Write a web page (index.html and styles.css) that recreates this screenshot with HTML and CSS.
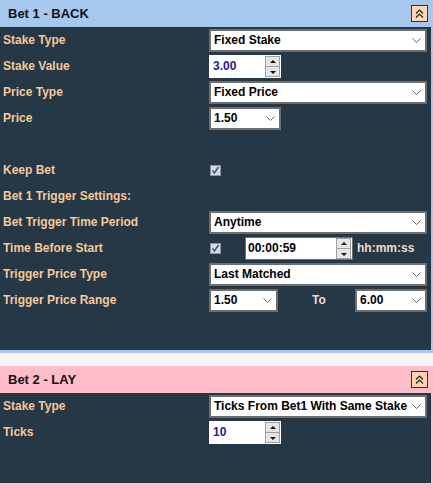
FILE: index.html
```html
<!DOCTYPE html>
<html>
<head>
    <meta charset="utf-8">
    <link rel="stylesheet" href="styles.css">
</head>
<body>
    <div class="panel panel-back">
        <div class="panel-head">
            <span>Bet 1 - BACK</span>
            <button class="collapse-btn"><svg width="11" height="11" viewBox="0 0 11 11"><path d="M2 5.5 L5.5 2 L9 5.5 M2 9.5 L5.5 6 L9 9.5" fill="none" stroke="#222" stroke-width="1.2"/></svg></button>
        </div>
        <div class="panel-body body-back">
            <div class="row">
                <label>Stake Type</label>
                <div class="select full"><span>Fixed Stake</span><svg class="chev" width="9" height="5" viewBox="0 0 9 5"><path d="M0.5 0.5 L4.5 4.5 L8.5 0.5" fill="none" stroke="#666" stroke-width="1"/></svg></div>
            </div>
            <div class="row">
                <label>Stake Value</label>
                <div class="spin-input"><span>3.00</span><div class="spinner"><div class="spin-up"></div><div class="spin-down"></div></div></div>
            </div>
            <div class="row">
                <label>Price Type</label>
                <div class="select full"><span>Fixed Price</span><svg class="chev" width="9" height="5" viewBox="0 0 9 5"><path d="M0.5 0.5 L4.5 4.5 L8.5 0.5" fill="none" stroke="#666" stroke-width="1"/></svg></div>
            </div>
            <div class="row">
                <label>Price</label>
                <div class="select small"><span>1.50</span><svg class="chev" width="9" height="5" viewBox="0 0 9 5"><path d="M0.5 0.5 L4.5 4.5 L8.5 0.5" fill="none" stroke="#666" stroke-width="1"/></svg></div>
            </div>
            <div class="row"></div>
            <div class="row">
                <label>Keep Bet</label>
                <div class="check"><svg width="11" height="11" viewBox="0 0 11 11"><rect x="0.5" y="0.5" width="10" height="10" fill="#d5dbe4" stroke="#8a94a6"/><path d="M2.5 5.5 L4.5 8 L8.5 2" fill="none" stroke="#3b55a6" stroke-width="1.6"/></svg></div>
            </div>
            <div class="row">
                <label>Bet 1 Trigger Settings:</label>
            </div>
            <div class="row">
                <label>Bet Trigger Time Period</label>
                <div class="select full"><span>Anytime</span><svg class="chev" width="9" height="5" viewBox="0 0 9 5"><path d="M0.5 0.5 L4.5 4.5 L8.5 0.5" fill="none" stroke="#666" stroke-width="1"/></svg></div>
            </div>
            <div class="row">
                <label>Time Before Start</label>
                <div class="time-group">
                    <div class="check"><svg width="11" height="11" viewBox="0 0 11 11"><rect x="0.5" y="0.5" width="10" height="10" fill="#d5dbe4" stroke="#8a94a6"/><path d="M2.5 5.5 L4.5 8 L8.5 2" fill="none" stroke="#3b55a6" stroke-width="1.6"/></svg></div>
                    <div class="spin-input time-input"><span>00:00:59</span><div class="spinner"><div class="spin-up"></div><div class="spin-down"></div></div></div>
                    <span class="unit">hh:mm:ss</span>
                </div>
            </div>
            <div class="row">
                <label>Trigger Price Type</label>
                <div class="select full"><span>Last Matched</span><svg class="chev" width="9" height="5" viewBox="0 0 9 5"><path d="M0.5 0.5 L4.5 4.5 L8.5 0.5" fill="none" stroke="#666" stroke-width="1"/></svg></div>
            </div>
            <div class="row">
                <label>Trigger Price Range</label>
                <div class="range-group">
                    <div class="select range"><span>1.50</span><svg class="chev" width="9" height="5" viewBox="0 0 9 5"><path d="M0.5 0.5 L4.5 4.5 L8.5 0.5" fill="none" stroke="#666" stroke-width="1"/></svg></div>
                    <span class="unit to">To</span>
                    <div class="select small"><span>6.00</span><svg class="chev" width="9" height="5" viewBox="0 0 9 5"><path d="M0.5 0.5 L4.5 4.5 L8.5 0.5" fill="none" stroke="#666" stroke-width="1"/></svg></div>
                </div>
            </div>
        </div>
    </div>

    <div class="panel panel-lay">
        <div class="panel-head">
            <span>Bet 2 - LAY</span>
            <button class="collapse-btn"><svg width="11" height="11" viewBox="0 0 11 11"><path d="M2 5.5 L5.5 2 L9 5.5 M2 9.5 L5.5 6 L9 9.5" fill="none" stroke="#222" stroke-width="1.2"/></svg></button>
        </div>
        <div class="panel-body body-lay">
            <div class="row">
                <label>Stake Type</label>
                <div class="select full"><span>Ticks From Bet1 With Same Stake</span><svg class="chev" width="9" height="5" viewBox="0 0 9 5"><path d="M0.5 0.5 L4.5 4.5 L8.5 0.5" fill="none" stroke="#666" stroke-width="1"/></svg></div>
            </div>
            <div class="row">
                <label>Ticks</label>
                <div class="spin-input"><span>10</span><div class="spinner"><div class="spin-up"></div><div class="spin-down"></div></div></div>
            </div>
        </div>
    </div>
</body>
</html>
```

FILE: styles.css
```css
body {
    font-family: "Liberation Sans", Arial, sans-serif;
    background-color: #f5f5f5;
    margin: 0;
    padding: 0;
    width: 433px;
}

.panel {
    box-sizing: border-box;
    width: 433px;
}

.panel-back {
    border-right: 2px solid #a6c8ec;
    border-bottom: 3px solid #a6c8ec;
    margin-bottom: 13px;
}

.panel-lay {
    border-right: 2px solid #ffbdca;
    border-bottom: 5px solid #ffbdca;
}

.panel-head {
    height: 27px;
    display: flex;
    align-items: center;
    justify-content: space-between;
    padding: 0 3px 0 8px;
    font-size: 13px;
    font-weight: bold;
    color: #111;
}

.panel-back .panel-head {
    background-color: #a6c8ec;
}

.panel-lay .panel-head {
    background-color: #ffbdca;
}

.collapse-btn {
    width: 17px;
    height: 17px;
    padding: 0;
    border: 1px solid #333;
    background-color: #fdd5b0;
    display: flex;
    align-items: center;
    justify-content: center;
    margin-top: -1px;
}

.panel-body {
    background-color: #263746;
    padding-right: 2px;
}

.body-back {
    padding-bottom: 37px;
}

.body-lay {
    padding-bottom: 38px;
}

.row {
    display: grid;
    grid-template-columns: 209px 1fr;
    height: 26px;
    align-items: center;
}

.row label {
    padding-left: 3px;
    color: #f6c898;
    font-size: 12px;
    font-weight: bold;
}

.select {
    box-sizing: border-box;
    height: 23px;
    background-color: #fff;
    border: 2px solid #6e6e6e;
    display: flex;
    align-items: center;
    justify-content: space-between;
    padding: 0 4px 0 3px;
    font-size: 12px;
    font-weight: bold;
    color: #000;
}

.select.full {
    width: 218px;
}

.select.small {
    width: 72px;
}

.select.range {
    width: 69px;
}

.chev {
    flex-shrink: 0;
}

.spin-input {
    box-sizing: border-box;
    width: 72px;
    height: 23px;
    background-color: #fff;
    display: flex;
    align-items: center;
    justify-content: space-between;
    padding: 0 1px 0 4px;
    font-size: 12px;
    font-weight: bold;
    color: #1e1e8e;
}

.spinner {
    box-sizing: border-box;
    width: 15px;
    height: 21px;
    border: 1px solid #a0a0a0;
    background-color: #e6e6e6;
    display: flex;
    flex-direction: column;
}

.spin-up,
.spin-down {
    flex: 1;
    position: relative;
}

.spin-up {
    border-bottom: 1px solid #a0a0a0;
}

.spin-up::after,
.spin-down::after {
    content: "";
    position: absolute;
    left: 4px;
    top: 3px;
    border-left: 3px solid transparent;
    border-right: 3px solid transparent;
}

.spin-up::after {
    border-bottom: 3px solid #111;
}

.spin-down::after {
    border-top: 3px solid #111;
    top: 4px;
}

.check {
    width: 11px;
    height: 11px;
    margin-left: 1px;
    display: flex;
}

.time-group {
    display: flex;
    align-items: center;
}

.time-input {
    width: 108px;
    margin-left: 24px;
    border: 1px solid #6e6e6e;
    padding-left: 2px;
    color: #000;
}

.unit {
    color: #ecdccb;
    font-size: 12px;
    font-weight: bold;
    margin-left: 4px;
}

.range-group {
    display: flex;
    align-items: center;
}

.unit.to {
    margin-left: 34px;
    width: 43px;
}
```
